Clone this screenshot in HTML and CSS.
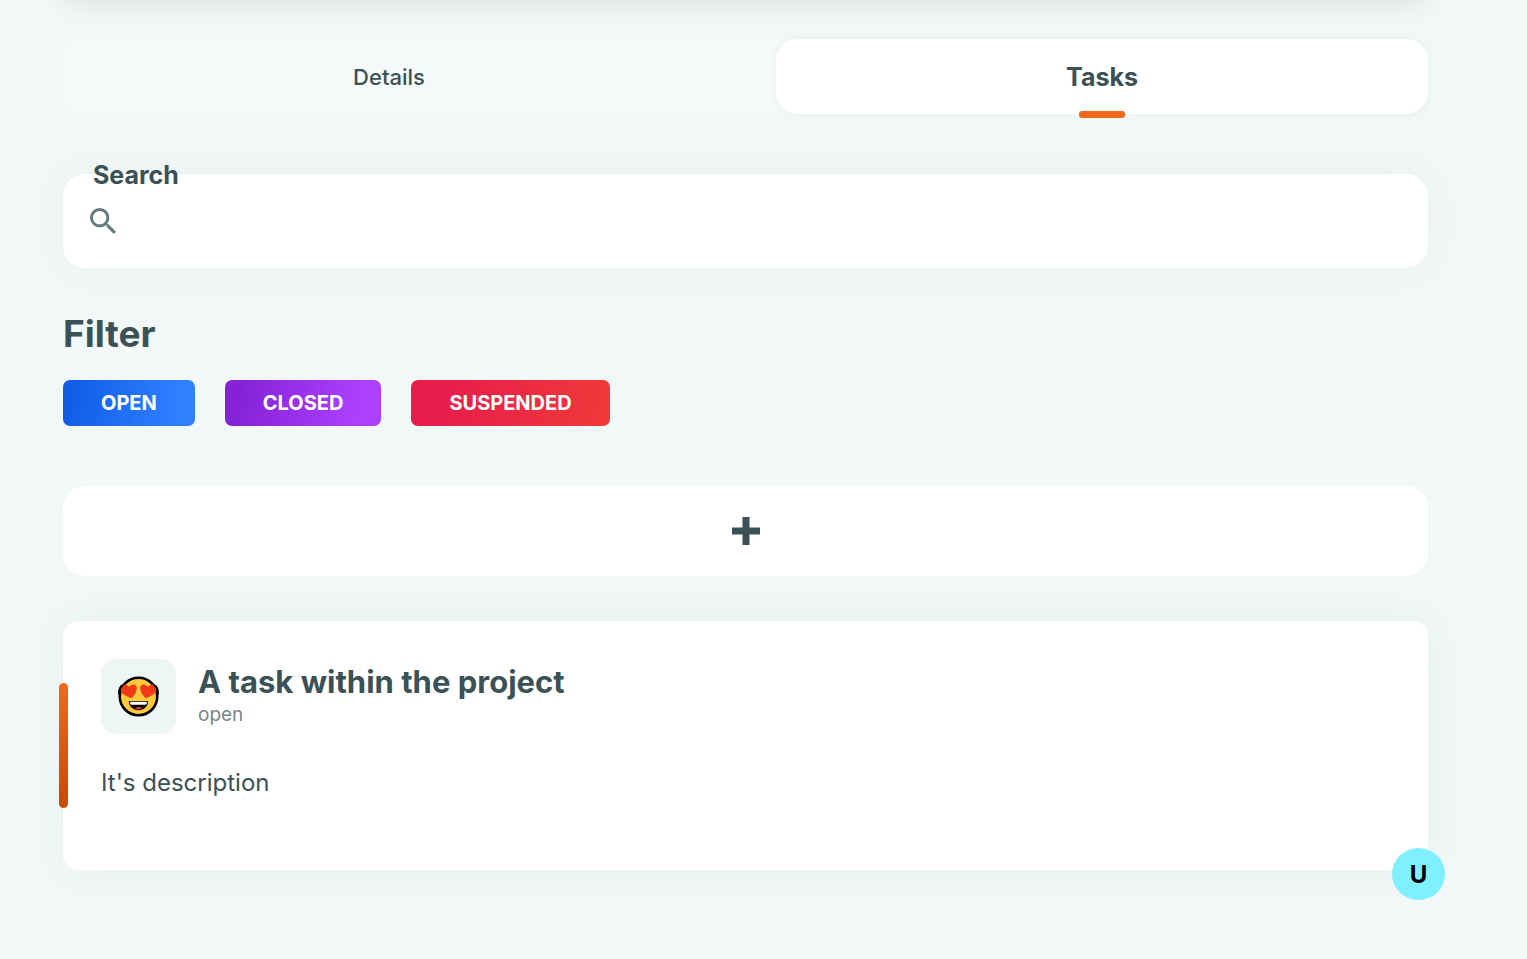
FILE: index.html
```html
<!DOCTYPE html>
<html lang="en">
<head>
<meta charset="utf-8">
<meta name="viewport" content="width=device-width, initial-scale=1">
<title>Tasks</title>
<link rel="stylesheet" href="styles.css">
</head>
<body>
<div class="hero-edge"></div>
<main class="page">
  <nav class="tabs">
    <button class="tab" type="button">Details</button>
    <button class="tab tab-active" type="button">Tasks</button>
  </nav>

  <div class="search">
    <label class="search-label" for="search">Search</label>
    <svg class="search-icon" viewBox="3 3 17.49 17.49" aria-hidden="true"><path d="M15.5 14h-.79l-.28-.27A6.471 6.471 0 0 0 16 9.5 6.5 6.5 0 1 0 9.5 16c1.61 0 3.09-.59 4.23-1.57l.27.28v.79l5 4.99L20.49 19l-4.99-5zm-6 0C7.010 14 5 11.990 5 9.500S7.010 5 9.500 5 14 7.010 14 9.500 11.990 14 9.500 14z"/></svg>
    <input class="search-input" id="search" type="text">
  </div>

  <section class="filter">
    <h2 class="filter-title">Filter</h2>
    <div class="filter-list">
      <button class="chip chip-open" type="button">OPEN</button>
      <button class="chip chip-closed" type="button">CLOSED</button>
      <button class="chip chip-suspended" type="button">SUSPENDED</button>
    </div>
  </section>

  <button class="add" type="button" aria-label="Add task">
    <svg class="add-icon" viewBox="0 0 28 28" aria-hidden="true"><path d="M10.500 0h7v10.500H28v7H17.500V28h-7V17.500H0v-7h10.500z"/></svg>
  </button>

  <article class="card">
    <header class="card-head">
      <div class="emoji">
        <svg class="emoji-icon" viewBox="0 0 42 42" aria-hidden="true">
          <circle cx="21" cy="21" r="19.200" fill="#ffc83d" stroke="#000" stroke-width="2.600"/>
          <path d="M13.800 22.700C9 21 2.500 18 2.200 13.500 2 8.500 8.500 7.500 11.500 11 15 6.500 20 9 19.200 13.500c-.5 3.500-3 6.800-5.400 9.200z" fill="#f03a17"/>
          <path d="M28.200 22.700C33 21 39.500 18 39.800 13.500 40 8.500 33.500 7.500 30.500 11 27 6.500 22 9 22.800 13.500c.5 3.500 3 6.800 5.400 9.200z" fill="#f03a17"/>
          <path d="M5 9.500Q.8 11.500 1.400 19M37 9.500Q41.200 11.500 40.600 19" fill="none" stroke="#000" stroke-width="2.400"/>
          <path d="M11.200 25.500h19.600c0 5.600-4.300 9.500-9.800 9.500s-9.800-3.900-9.800-9.500z" fill="#000"/>
          <path d="M12.500 26.500h17v1.500q0 1.500-1.500 1.500H14q-1.500 0-1.500-1.500z" fill="#fff"/>
          <path d="M17.500 33.200q3.500-3 7 0-3.500 1.800-7 0z" fill="#f03a17"/>
        </svg>
      </div>
      <div class="card-heading">
        <h3 class="card-title">A task within the project</h3>
        <p class="card-status">open</p>
      </div>
    </header>
    <p class="card-text">It's description</p>
    <span class="avatar">U</span>
  </article>
</main>
</body>
</html>
```
FILE: styles.css
```css
* { box-sizing: border-box; }

body {
  margin: 0;
  background: #f2f8f8;
  color: #3a5156;
  font-family: Inter, sans-serif;
  overflow-x: hidden;
}

button, input { font: inherit; color: inherit; border: 0; }

.hero-edge {
  height: 38px;
  margin: -38px 99px 39px 63px;
  border-radius: 22px;
  box-shadow: 0 0 30px rgba(0, 0, 0, .12);
}

.page { padding: 0 99px 58px 63px; }

.tabs {
  display: grid;
  grid-template-columns: 1fr 1fr;
  column-gap: 61px;
  border-radius: 22px;
  background: #f5f9fa;
}

.tab {
  position: relative;
  height: 75px;
  padding: 0;
  border-radius: 22px;
  background: none;
  font-size: 22px;
  font-weight: 500;
}

.tab-active {
  background: #fff;
  font-size: 25px;
  font-weight: 700;
  box-shadow: 0 0 8px rgba(58, 81, 86, .06);
}

.tab-active::after {
  content: "";
  position: absolute;
  left: calc(50% - 23px);
  bottom: -4px;
  width: 46px;
  height: 7px;
  border-radius: 3px;
  background: #ee6a1a;
}

.search {
  position: relative;
  display: flex;
  align-items: center;
  height: 94px;
  margin-top: 60px;
  padding: 0 27px;
  border-radius: 22px;
  background: #fff;
  box-shadow: 0 0 38px rgba(58, 81, 86, .05);
}

.search-label {
  position: absolute;
  left: 30px;
  top: -14px;
  font-size: 25px;
  line-height: 30px;
  font-weight: 700;
}

.search-icon { flex: none; width: 26px; height: 26px; fill: #647a7c; }

.search-input {
  flex: 1;
  min-width: 0;
  height: 60px;
  padding: 0 15px;
  background: transparent;
  font-size: 24px;
  outline: none;
}

.filter { margin-top: 42px; }

.filter-title {
  margin: 0 0 22px;
  font-size: 37px;
  line-height: 48px;
  font-weight: 700;
}

.filter-list { display: flex; flex-wrap: wrap; gap: 30px; }

.chip {
  height: 46px;
  padding: 0 38px;
  border-radius: 7px;
  color: #fff;
  font-size: 20px;
  font-weight: 700;
}

.chip-open { background: linear-gradient(100deg, #0f5ae6, #2e80ff 85%); }
.chip-closed { background: linear-gradient(100deg, #8522d6 10%, #ad40ff 85%); }
.chip-suspended { background: linear-gradient(100deg, #e71d4c 15%, #f03a38); }

.add {
  display: flex;
  align-items: center;
  justify-content: center;
  width: 100%;
  height: 90px;
  margin-top: 60px;
  padding: 0;
  border-radius: 22px;
  background: #fff;
}

.add-icon { width: 28px; height: 28px; fill: #3a5156; }

.card {
  position: relative;
  min-height: 249px;
  margin-top: 45px;
  padding: 38px;
  border-radius: 15px;
  background: #fff;
  box-shadow: 0 0 38px rgba(58, 81, 86, .06);
}

.card::before {
  content: "";
  position: absolute;
  left: -4px;
  top: 25%;
  width: 9px;
  height: 50%;
  border-radius: 5px;
  background: linear-gradient(#f06a1c, #c84a00);
}

.card-head { display: flex; align-items: center; gap: 22px; }

.emoji {
  display: grid;
  place-items: center;
  width: 75px;
  height: 75px;
  border-radius: 15px;
  background: #edf5f5;
}

.emoji-icon { width: 41px; height: 41px; }

.card-title { margin: 0; font-size: 31px; line-height: 36px; font-weight: 700; }
.card-status { margin: 0; font-size: 19px; line-height: 30px; color: #75868a; }
.card-text { margin: 30px 0 0; font-size: 24px; line-height: 38px; }

.avatar {
  position: absolute;
  right: -17px;
  bottom: -30px;
  display: grid;
  place-items: center;
  width: 53px;
  height: 52px;
  border-radius: 50%;
  background: #7ef0ff;
  color: #000;
  font-size: 24px;
  font-weight: 700;
}
```
